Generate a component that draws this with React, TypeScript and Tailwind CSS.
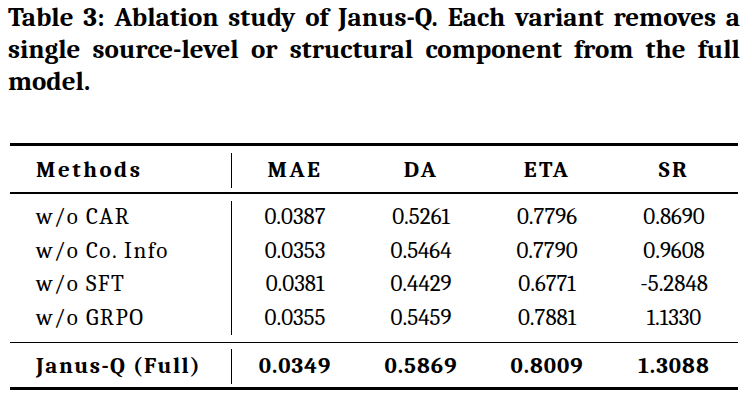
const rows = [
  { name: "w/o CAR", mae: "0.0387", da: "0.5261", eta: "0.7796", sr: "0.8690" },
  { name: "w/o Co. Info", mae: "0.0353", da: "0.5464", eta: "0.7790", sr: "0.9608" },
  { name: "w/o SFT", mae: "0.0381", da: "0.4429", eta: "0.6771", sr: "-5.2848" },
  { name: "w/o GRPO", mae: "0.0355", da: "0.5459", eta: "0.7881", sr: "1.1330" },
];

const cols = "grid grid-cols-[222px_126px_126px_126px_128px]";

export default function App() {
  return (
    <div className="w-[754px] h-[400px] bg-white overflow-hidden text-black font-serif">
      {/* Caption */}
      <div className="ml-[8px] w-[732px] pt-[2px] text-[27px] leading-[32px] font-bold">
        <div className="text-justify [text-align-last:justify]">
          Table 3: Ablation study of Janus-Q. Each variant removes a
        </div>
        <div className="text-justify [text-align-last:justify]">
          single source-level or structural component from the full
        </div>
        <div>model.</div>
      </div>

      {/* Table */}
      <div className="ml-[10px] w-[728px] mt-[45px]">
        <div className="h-[3px] bg-black" />

        <div className={`${cols} pt-[7px] pb-[4px] text-[23px] font-bold`}>
          <div className="h-[35px] flex items-center pl-[26px] border-r border-black tracking-[2.5px]">
            Methods
          </div>
          <div className="h-[35px] flex items-center justify-center tracking-[2.5px]">MAE</div>
          <div className="h-[35px] flex items-center justify-center tracking-[2.5px]">DA</div>
          <div className="h-[35px] flex items-center justify-center tracking-[2.5px]">ETA</div>
          <div className="h-[35px] flex items-center justify-center tracking-[2.5px]">SR</div>
        </div>

        <div className="h-[1.5px] bg-black" />

        <div className={`${cols} py-[7px] text-[23px]`}>
          {rows.map((r) => (
            <div key={r.name} className="contents">
              <div className="h-[33.5px] flex items-center pl-[26px] border-r border-black tracking-[1.5px]">
                {r.name}
              </div>
              <div className="h-[33.5px] flex items-center justify-center">{r.mae}</div>
              <div className="h-[33.5px] flex items-center justify-center">{r.da}</div>
              <div className="h-[33.5px] flex items-center justify-center">{r.eta}</div>
              <div className="h-[33.5px] flex items-center justify-center">{r.sr}</div>
            </div>
          ))}
        </div>

        <div className="h-[1.5px] bg-black" />

        <div className={`${cols} pt-[6px] pb-[3px] text-[23px] font-bold`}>
          <div className="h-[35px] flex items-center pl-[26px] border-r border-black tracking-[1.5px]">
            Janus-Q (Full)
          </div>
          <div className="h-[35px] flex items-center justify-center tracking-[1px]">0.0349</div>
          <div className="h-[35px] flex items-center justify-center tracking-[1px]">0.5869</div>
          <div className="h-[35px] flex items-center justify-center tracking-[1px]">0.8009</div>
          <div className="h-[35px] flex items-center justify-center tracking-[1px]">1.3088</div>
        </div>

        <div className="h-[3px] bg-black" />
      </div>
    </div>
  );
}
